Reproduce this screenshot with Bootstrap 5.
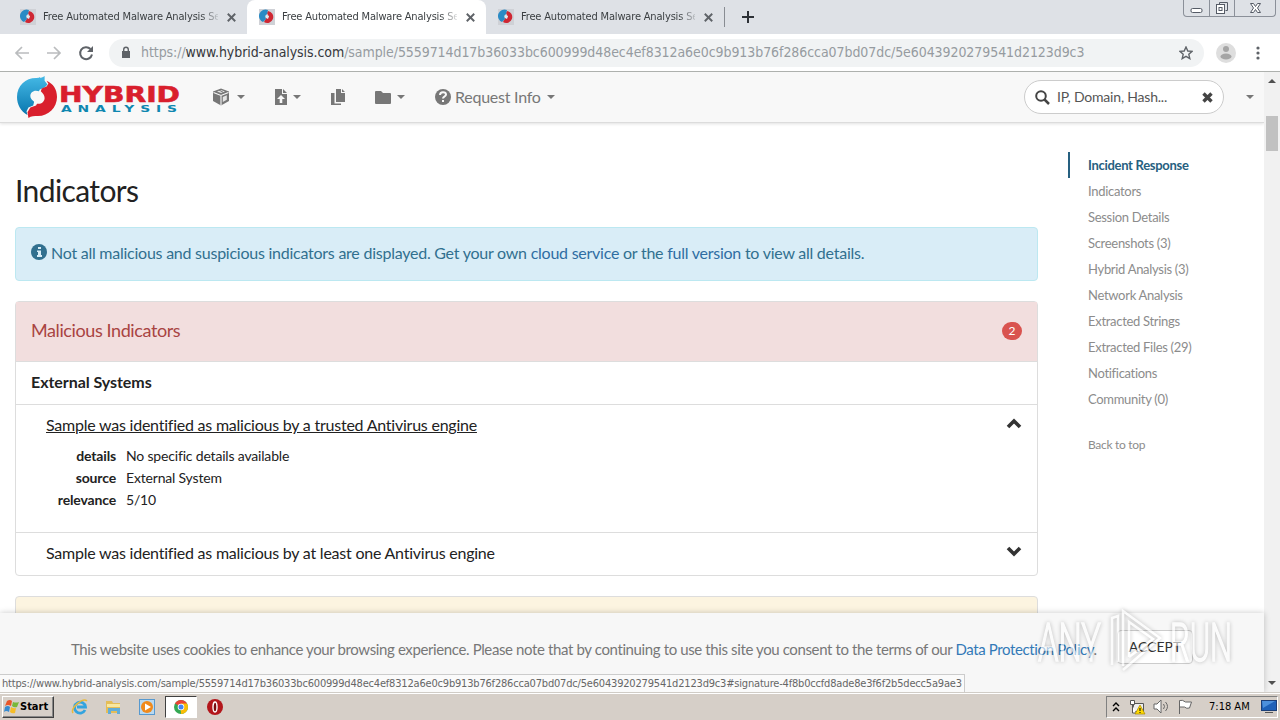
<!DOCTYPE html>
<html lang="en">
<head>
  <meta charset="UTF-8">
  <meta name="viewport" content="width=device-width, initial-scale=1">
  <title>Free Automated Malware Analysis Service</title>
  <link href="https://cdn.jsdelivr.net/npm/bootstrap@5.3.0/dist/css/bootstrap.min.css" rel="stylesheet">
  <style>
    body {
      width: 1280px;
      height: 720px;
      overflow: hidden;
      font-family: Lato, sans-serif;
      font-size: 16px;
      line-height: 22px;
      color: #222;
      background: #fff;
    }
    svg { display: block; flex: none; }
    a { text-decoration: none; color: #337ab7; }
    .sys { font-family: "DejaVu Sans Condensed", "DejaVu Sans", sans-serif; }

    /* browser frame */
    .tabstrip { height: 34px; background: #dee1e6; }
    .tab { height: 34px; width: 239px; padding-left: 20px; font-size: 11px; color: #3c4043; }
    .tab-first { width: 247px; }
    .tab-on { background: #fff; border-radius: 8px 8px 0 0; padding-left: 12px; }
    .tab-title {
      width: 175px; margin-left: 7px; white-space: nowrap; overflow: hidden; letter-spacing: -.17px;
      -webkit-mask-image: linear-gradient(90deg, #000 158px, transparent 178px);
    }
    .tab-x { margin-left: 9px; }
    .tab-sep { width: 1px; height: 20px; background: #888c92; margin-left: 11px; }
    .winbtns { height: 17px; margin-right: 4px; border: 1px solid #8b9099; border-top: 0; border-radius: 0 0 4px 4px; }
    .winbtns div { width: 25px; height: 16px; }
    .winbtns div + div { border-left: 1px solid #8b9099; }
    .winbtns div:last-child { width: 41px; }
    .toolbar { height: 38px; border-bottom: 1px solid #aeb1ae; padding-left: 14px; }
    .omnibox { width: 1095px; height: 28px; border-radius: 14px; background: #f1f3f4; margin-left: 13px; padding: 0 11px; }
    .omnibox .addr { font-size: 14px; letter-spacing: -.07px; color: #969ba0; margin: -1px 0 0 9px; white-space: nowrap; }
    .omnibox .addr span { color: #35373b; }

    /* page */
    .topnav { height: 51px; background: #f8f8f8; border-bottom: 1px solid #dcdcdc; box-shadow: 0 1px 3px rgba(0,0,0,.12); color: #777; }
    .nav-word { letter-spacing: -.25px; margin-top: -1px; }
    .caret { width: 0; border: 4px solid transparent; border-top-color: #777; border-bottom: 0; }
    .finder { width: 200px; height: 34px; border: 1px solid #ccc; border-radius: 17px; background: #fff; font-size: 14px; color: #555; padding: 0 10px; letter-spacing: -.2px; }
    .main-col { width: 1023px; margin-left: 15px; }
    .main-col h2 { font-size: 30px; line-height: 33px; font-weight: 400; margin: 51px 0 20px; letter-spacing: -.6px; }
    .notice { height: 54px; padding: 0 15px; background: #d9edf7; border: 1px solid #bce8f1; border-radius: 4px; color: #31708f; }
    .notice-text { letter-spacing: -.245px; margin-top: -2px; }
    .notice a { color: #2f6da3; }
    .panel-box { margin-top: 20px; border: 1px solid #ddd; border-radius: 4px; }
    .panel-top { height: 60px; background: #f2dede; border-bottom: 1px solid #ddd; color: #a94442; font-size: 18px; padding: 0 15px; }
    .panel-name { letter-spacing: -.4px; margin-top: -3px; }
    .count { width: 20px; height: 18px; border-radius: 9px; background: #d9534f; color: #fff; font-size: 12px; line-height: 18px; margin-top: -1px; }
    .rowline { border-bottom: 1px solid #ddd; }
    .group-name { letter-spacing: -.05px; margin-top: -2px; }
    .sig { letter-spacing: -.23px; }
    .facts { font-size: 14px; padding-top: 1px; }
    .facts dt { width: 70px; text-align: right; font-weight: 700; line-height: 22px; letter-spacing: -.15px; }
    .facts dd { margin: 0 0 0 10px; line-height: 22px; letter-spacing: -.18px; }
    .panel-warn { height: 60px; background: #fcf4e0; border-radius: 4px; border: 1px solid #ddd; margin-top: 20px; }
    .toc { margin: 29px 0 0 30px; font-size: 13px; letter-spacing: -.3px; color: #8c8c8c; }
    .toc li { height: 26px; line-height: 26px; padding-left: 18px; border-left: 2px solid transparent; white-space: nowrap; }
    .toc .now { color: #266080; border-color: #266080; font-weight: 700; }
    .toc .back { margin-top: 20px; font-size: 12px; }
    .vscroll { width: 16px; background: #f1f1f1; }
    .thumb { width: 12px; height: 35px; background: #c1c1c1; }
    .cookies { left: 0; right: 16px; bottom: 0; height: 79px; background: #f7f7f7; box-shadow: 0 0 6px rgba(0,0,0,.22); color: #777; }
    .cookie-text { width: 1046px; margin: -8px 0 0 71px; font-size: 15px; letter-spacing: -.38px; }
    .accept { height: 34px; width: 76px; border: 1px solid #ccc; border-radius: 4px; background: #fff; color: #333; font-size: 14px; line-height: 31px; margin-top: -11px; }
    .linkhint { left: 0; bottom: 0; height: 18px; width: 965px; padding-left: 2px; background: #fafafa; border: 1px solid #ccc; border-left: 0; border-bottom: 0; font-size: 11px; line-height: 17px; color: #666; white-space: nowrap; letter-spacing: -.188px; }
    .mark-logo { right: 32px; bottom: 13px; opacity: .6; filter: drop-shadow(0 0 2px rgba(0,0,0,.4)); }

    /* desktop bar */
    .deskbar { height: 28px; background: #d6cfc8; border-top: 1px solid #d0ccc6; box-shadow: inset 0 1px #fff; font-size: 11px; color: #000; }
    .start { width: 52px; height: 22px; border: 1px solid; border-color: #fff #404040 #404040 #fff; box-shadow: inset -1px -1px #888; font-weight: 700; }
    .task-on { width: 32px; height: 22px; background: #fff; border: 1px solid; border-color: #404040 #fff #fff #404040; }
    .tray { width: 172px; height: 22px; border: 1px solid; border-color: #808080 #fff #fff #808080; }
  </style>
</head>
<body class="d-flex flex-column">
  <svg width="0" height="0" class="position-absolute">
    <defs>
      <linearGradient id="gBlue" x1="0" y1="0" x2="0" y2="1"><stop offset="0" stop-color="#45b9e6"/><stop offset="1" stop-color="#0876ae"/></linearGradient>
      <symbol id="swirl" viewBox="0 0 42 44">
        <path fill="url(#gBlue)" d="M29 0v5l3 4-3 3-5 2-1 2c-5-2-9 1-9 5 0 3 2 4 4 6l-1 4-5 2-2 4 1 4C4 37 0 30 0 22 0 10 9 2 20 2c4 0 7 0 9-2z"/>
        <path fill="#d91f2d" d="M31 5c7 3 11 9 11 17 0 11-9 20-20 20-4 0-7 0-10 2l-1-6 3-5 6-2 1-2c4 1 8-2 8-6 0-3-2-5-4-7l1-3 5-2 2-3z"/>
      </symbol>
      <symbol id="fav" viewBox="0 0 16 16"><path fill="#cfd1d6" d="M0 0h16v16H0z"/><path fill="#cf2733" d="M9 2a6 6 0 1 1-4 11l2-4 3-1-2-4z"/><path fill="#2a8bc5" d="M9 1 8 5 6 7l1 3-3 3A6 6 0 0 1 9 1z"/><path fill="#dceaf2" d="m7 6 3 1-1 3-2-1z"/></symbol>
      <symbol id="x" viewBox="0 0 8 8"><path d="m.7.7 6.6 6.6m0-6.6L.7 7.3" stroke="#5f6368" stroke-width="1.7"/></symbol>
    </defs>
  </svg>

  <!-- tabs -->
  <div class="tabstrip sys d-flex align-items-center flex-shrink-0">
    <div class="tab tab-first d-flex align-items-center">
      <svg width="16" height="16"><use href="#fav"/></svg><span class="tab-title">Free Automated Malware Analysis Service</span>
      <svg class="tab-x" width="9" height="9"><use href="#x"/></svg>
    </div>
    <div class="tab tab-on d-flex align-items-center">
      <svg width="16" height="16"><use href="#fav"/></svg><span class="tab-title">Free Automated Malware Analysis Service</span>
      <svg class="tab-x" width="9" height="9"><use href="#x"/></svg>
    </div>
    <div class="tab d-flex align-items-center ps-2">
      <svg class="ms-1" width="16" height="16"><use href="#fav"/></svg><span class="tab-title">Free Automated Malware Analysis Service</span>
      <svg class="tab-x" width="9" height="9"><use href="#x"/></svg>
      <div class="tab-sep flex-shrink-0"></div>
    </div>
    <svg width="12" height="12" style="margin-left:17px"><path d="M6 0v12M0 6h12" stroke="#2d3136" stroke-width="2"/></svg>
    <div class="winbtns d-flex ms-auto align-self-start">
      <div><svg width="25" height="16"><rect x="7" y="8.500" width="11" height="4" rx="1.500" fill="#fff" stroke="#555b66"/></svg></div>
      <div><svg width="25" height="16" fill="none" stroke="#555b66"><path d="M9.500 4.500v-2h8v8h-2"/><rect x="6.500" y="4.500" width="8" height="9" fill="#fff"/><rect x="9" y="7.500" width="3" height="3"/></svg></div>
      <div><svg width="41" height="16"><path d="M15.500 3.500h3l2 3 2-3h3l-3 4.500 3 4.500h-3l-2-3-2 3h-3l3-4.500z" fill="#fff" stroke="#555b66"/></svg></div>
    </div>
  </div>

  <!-- address bar -->
  <div class="toolbar d-flex align-items-center flex-shrink-0">
    <svg width="82" height="18" fill="none" stroke-width="1.700">
      <path d="M15 9H2m6-6L2 9l6 6M33 9h13m-6-6 6 6-6 6" stroke="#babcbe"/>
      <path d="M76.500 5A6 6 0 1 0 78 10.500" stroke="#5f6368" stroke-width="2"/><path d="M79 2v6h-6z" fill="#5f6368"/>
    </svg>
    <div class="omnibox d-flex align-items-center">
      <svg width="12" height="14"><path d="M2 5h8v7H2z" fill="#5f6368"/><path d="M3.700 5V3.500a2.300 2.300 0 0 1 4.600 0V5" fill="none" stroke="#5f6368" stroke-width="1.400"/></svg>
      <div class="addr sys">https://<span>www.hybrid-analysis.com</span>/sample/5559714d17b36033bc600999d48ec4ef8312a6e0c9b913b76f286cca07bd07dc/5e6043920279541d2123d9c3</div>
      <svg class="ms-auto" width="14" height="14" viewBox="0 0 14 14"><path d="m7 1 1.800 4 4.300.4-3.300 2.900 1 4.300L7 10.300l-3.800 2.300 1-4.300L.9 5.400 5.200 5z" fill="none" stroke="#5f6368" stroke-width="1.400"/></svg>
    </div>
    <svg width="20" height="20" style="margin-left:12px"><circle cx="10" cy="10" r="10" fill="#dedede"/><circle cx="10" cy="6" r="3" fill="#a5a5a5"/><ellipse cx="10" cy="13.500" rx="5.500" ry="3" fill="#a5a5a5"/></svg>
    <svg width="4" height="14" style="margin-left:20px" fill="#5f6368"><circle cx="2" cy="2" r="1.600"/><circle cx="2" cy="7" r="1.600"/><circle cx="2" cy="12" r="1.600"/></svg>
  </div>

  <div class="d-flex flex-grow-1 position-relative overflow-hidden">
    <div class="flex-grow-1">
      <nav class="topnav d-flex align-items-center">
        <svg width="166" height="46" style="margin-left:16px">
          <use href="#swirl" width="40" height="42" x="1" y="2"/>
          <text x="43" y="27.500" font-family="DejaVu Sans" font-weight="700" font-size="22" fill="#d91f2d" stroke="#d91f2d" stroke-width=".6" textLength="121" lengthAdjust="spacingAndGlyphs">HYBRID</text>
          <text x="45" y="38" font-family="DejaVu Sans" font-weight="700" font-size="9.500" letter-spacing="4" fill="#0f87b0" textLength="122" lengthAdjust="spacingAndGlyphs">ANALYSIS</text>
        </svg>
        <svg width="18" height="18" viewBox="0 0 18 18" style="margin-left:30px"><path fill="#777" d="M9 .5 17 3.500v9.500l-8 4.500L1 13V3.500z"/><path d="m1.500 4.500 7.500 3 7.500-3M9 7.500v10" fill="none" stroke="#f8f8f8" stroke-width="1.100"/><path fill="#f8f8f8" d="m9 2 4 1.500L9 5 5 3.500zM10.800 9l4-1.800v4.600l-4 2.300z" opacity=".85"/><path stroke="#777" d="m7 2 4.500 2.500"/></svg>
        <span class="caret" style="margin-left:7px"></span>
        <svg width="12" height="16" style="margin-left:30px"><path fill="#777" d="M0 0h7v5h5v11H0zM8 0l4 4H8z"/><path fill="#f8f8f8" d="m6 6 4 4H7.300v4H4.700v-4H2z"/></svg>
        <span class="caret" style="margin-left:6px"></span>
        <svg width="15" height="16" style="margin-left:30px" fill="#777"><path d="M5 0h5v4h4v9H5zM11 0l3 3h-3z"/><path d="M0 4h3.500v10.500H10V16H0z"/></svg>
        <svg width="16" height="13" style="margin-left:29px"><path fill="#777" d="M0 1q0-1 1-1h5l2 2h7q1 0 1 1v9q0 1-1 1H1q-1 0-1-1z"/></svg>
        <span class="caret" style="margin-left:6px"></span>
        <svg width="16" height="16" style="margin-left:30px"><circle cx="8" cy="8" r="8" fill="#777"/><path d="M5 6c0-4 6-3.500 6-.500 0 2-3 2-3 4" fill="none" stroke="#f8f8f8" stroke-width="2"/><path d="M7 11h2v2H7z" fill="#f8f8f8"/></svg>
        <span class="nav-word ms-1">Request Info</span>
        <span class="caret" style="margin-left:6px"></span>
        <div class="finder d-flex align-items-center ms-auto">
          <svg width="15" height="15"><circle cx="6" cy="6" r="4.800" fill="none" stroke="#444" stroke-width="2"/><path d="m9.500 9.500 4.500 4.500" stroke="#444" stroke-width="2.500"/></svg>
          <span style="margin-left:7px">IP, Domain, Hash...</span>
          <svg class="ms-auto" width="11" height="11"><path d="m1.500 1.500 8 8m0-8-8 8" stroke="#444" stroke-width="3.400"/></svg>
        </div>
        <span class="caret" style="margin:0 10px 0 22px"></span>
      </nav>

      <div class="d-flex">
        <main class="main-col">
          <h2>Indicators</h2>
          <div class="notice d-flex align-items-center">
            <svg width="16" height="16" class="me-1" style="margin-top:-4px"><circle cx="8" cy="8" r="8" fill="#31708f"/><path d="M7 3h3v2H7zM6 6.500h4V11h1v2H6v-2h1V8H6z" fill="#d9edf7"/></svg>
            <span class="notice-text">Not all malicious and suspicious indicators are displayed. Get your own <a href="#">cloud service</a> or the <a href="#">full version</a> to view all details.</span>
          </div>
          <section class="panel-box">
            <div class="panel-top d-flex align-items-center justify-content-between">
              <span class="panel-name">Malicious Indicators</span><span class="count text-center">2</span>
            </div>
            <div class="rowline fw-bold d-flex align-items-center" style="height:43px;padding-left:15px"><span class="group-name">External Systems</span></div>
            <div class="rowline" style="height:128px;padding:9px 15px 0 30px">
              <div class="d-flex justify-content-between">
                <span class="sig text-decoration-underline">Sample was identified as malicious by a trusted Antivirus engine</span>
                <svg width="16" height="17"><path d="m2 13 6-6 6 6" fill="none" stroke="#333" stroke-width="3.600"/></svg>
              </div>
              <dl class="facts mt-2 mb-0">
                <div class="d-flex"><dt>details</dt><dd>No specific details available</dd></div>
                <div class="d-flex"><dt>source</dt><dd>External System</dd></div>
                <div class="d-flex"><dt>relevance</dt><dd>5/10</dd></div>
              </dl>
            </div>
            <div class="d-flex justify-content-between" style="height:42px;padding:9px 15px 0 30px">
              <span class="sig">Sample was identified as malicious by at least one Antivirus engine</span>
              <svg width="16" height="16"><path d="m2 6 6 6 6-6" fill="none" stroke="#333" stroke-width="3.600"/></svg>
            </div>
          </section>
          <div class="panel-warn"></div>
        </main>
        <aside>
          <ul class="toc list-unstyled mb-0">
            <li class="now">Incident Response</li>
            <li>Indicators</li>
            <li>Session Details</li>
            <li>Screenshots (3)</li>
            <li>Hybrid Analysis (3)</li>
            <li>Network Analysis</li>
            <li>Extracted Strings</li>
            <li>Extracted Files (29)</li>
            <li>Notifications</li>
            <li>Community (0)</li>
            <li class="back">Back to top</li>
          </ul>
        </aside>
      </div>
    </div>

    <div class="vscroll d-flex flex-column align-items-center">
      <svg width="16" height="44"><path d="m4 11 4-4 4 4z" fill="#505050"/></svg>
      <div class="thumb"></div>
      <svg class="mt-auto" width="16" height="17"><path d="m4 6 4 4 4-4z" fill="#505050"/></svg>
    </div>

    <div class="cookies position-absolute d-flex align-items-center">
      <span class="cookie-text text-nowrap flex-shrink-0">This website uses cookies to enhance your browsing experience. Please note that by continuing to use this site you consent to the terms of our <a href="#">Data Protection Policy</a>.</span>
      <span class="accept text-center">ACCEPT</span>
    </div>
    <div class="linkhint sys position-absolute">https://www.hybrid-analysis.com/sample/5559714d17b36033bc600999d48ec4ef8312a6e0c9b913b76f286cca07bd07dc/5e6043920279541d2123d9c3#signature-4f8b0ccfd8ade8e3f6f2b5decc5a9ae3</div>
    <svg class="mark-logo position-absolute" width="214" height="72" fill="none" stroke="#fff">
      <g font-family="Roboto" font-size="54" font-weight="300" fill="#fff" stroke-width="1.500">
        <text x="4" y="54" textLength="63" lengthAdjust="spacingAndGlyphs">ANY</text>
        <text x="136" y="54" textLength="62" lengthAdjust="spacingAndGlyphs">RUN</text>
      </g>
      <path d="M78 58V11l6-2v46M89 59V4l37 27-37 32M95 50V15l24 17-24 18" stroke-width="2.500"/>
    </svg>
  </div>

  <!-- desktop bar -->
  <footer class="deskbar sys d-flex align-items-center flex-shrink-0">
    <div class="start d-flex align-items-center" style="margin-left:2px">
      <svg width="17" height="16" viewBox="0 0 17 16"><path fill="#e8562a" d="M4 2q3-2 5 0L8 7Q5 5 2 7z"/><path fill="#78b83a" d="M10 3q3 1 6 0l-2 5q-3 1-5-1z"/><path fill="#368ad0" d="M2 8q3-2 5 0l-1 5q-3-2-5 0z"/><path fill="#f6bd27" d="M8 8q3 2 5 1l-1 5q-3 1-5-1z"/></svg>
      <span class="start-word">Start</span>
    </div>
    <svg width="18" height="18" viewBox="0 0 18 18" style="margin-left:17px"><path d="M14 12a5.500 5.500 0 1 1 .5-3H6" fill="none" stroke="#33a4df" stroke-width="2.800"/><path d="M2 15C-1 10 12-1 16 3" fill="none" stroke="#e9b93b" stroke-width="1.500"/></svg>
    <svg width="17" height="16" style="margin-left:16px"><path fill="#e4bd58" d="M1 2h6l1 2h7v10H1z"/><path fill="#f8e8a0" d="M2 5h13v3H2z"/><path fill="#62add8" d="M3 9h12v6h-3v-3H6v3H3z"/></svg>
    <svg width="16" height="16" style="margin-left:17px"><rect x=".5" y=".5" width="15" height="15" fill="#b9d9f0" stroke="#5799cf"/><circle cx="8" cy="8" r="6" fill="#f08a1c"/><path d="m6 4.500 6 3.500-6 3.500z" fill="#fff"/></svg>
    <div class="task-on d-flex align-items-center justify-content-center" style="margin-left:10px">
      <svg width="14" height="14" viewBox="0 0 14 14"><circle cx="7" cy="7" r="7" fill="#34a853"/><path fill="#ea4335" d="M7 7 1 3.500a7 7 0 0 1 12 0z"/><path fill="#fbbc05" d="M7 7h-.5L7 14a7 7 0 0 0 6-10.500H7z"/><circle cx="7" cy="7" r="3.300" fill="#fff"/><circle cx="7" cy="7" r="2.500" fill="#4285f4"/></svg>
    </div>
    <svg width="16" height="16" style="margin-left:10px"><circle cx="8" cy="8" r="8" fill="#b3161b"/><ellipse cx="8" cy="8" rx="2" ry="5" fill="#7a0b0e" stroke="#fff" stroke-width="1.400"/></svg>
    <div class="tray d-flex align-items-center ms-auto" style="margin-right:2px">
      <svg width="8" height="10" style="margin-left:5px"><path d="m1 4 3-3 3 3M1 9l3-3 3 3" fill="none" stroke="#000" stroke-width="1.400"/></svg>
      <svg width="17" height="16" style="margin-left:9px"><path d="M4.500 4.500h10v8h-10z" fill="#eee" stroke="#555"/><path d="M1.500 1.500h4v4h-4zM3.500 6v8H7" fill="#fff" stroke="#555"/><path d="m11 6 5 9H6z" fill="#ffd900" stroke="#a88600" stroke-width=".7"/><path d="M11 9v3m0 1v1" stroke="#222" stroke-width="1.200"/></svg>
      <svg width="17" height="15" style="margin-left:7px" fill="none" stroke="#666"><path d="M1 5h3l4-4v13l-4-4H1z" fill="#fff"/><path d="M10.500 5q2 2.500 0 5m2-7q4 4.500 0 9"/></svg>
      <svg width="17" height="16" style="margin-left:7px"><path d="M2.500 15V1.500q3-1 6 1.500h6l-2 6q-3 1-5-1h-5" fill="#fff" stroke="#666"/></svg>
      <span class="clock" style="margin-left:15px">7:18 AM</span>
      <svg class="ms-auto" width="16" height="14"><rect x=".5" y=".5" width="15" height="10" fill="#1e61b8" stroke="#1c3f77"/><path d="M1 1h13L2 8z" fill="#4d91dc"/><path d="M4 12.500h8" stroke="#555"/></svg>
    </div>
  </footer>
  <script src="https://cdn.jsdelivr.net/npm/bootstrap@5.3.0/dist/js/bootstrap.bundle.min.js"></script>
</body>
</html>
